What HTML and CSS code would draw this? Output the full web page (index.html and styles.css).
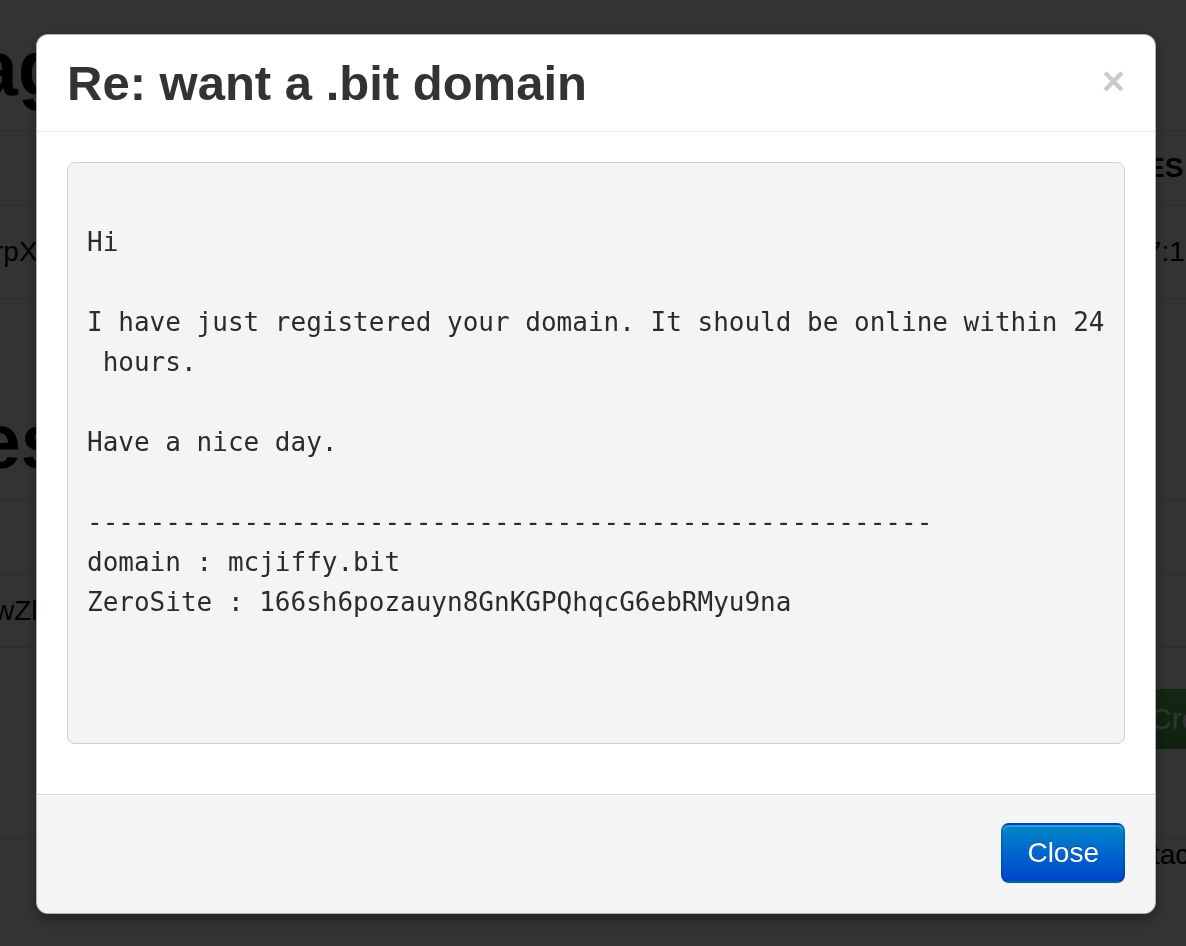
FILE: index.html
```html
<!DOCTYPE html>
<html>
<head>
<meta charset="utf-8">
<title>Re: want a .bit domain</title>
<link rel="stylesheet" href="styles.css">
</head>
<body>
<div class="page">
  <div class="row head1"><div class="l"><span class="h1 cut-a">ag</span></div><div></div><div class="r"></div></div>
  <div class="row th"><div class="l"></div><div></div><div class="r"><b class="cut-r">ES</b></div></div>
  <div class="row td"><div class="l"><span class="cut-p">rpX</span></div><div></div><div class="r"><span class="cut-r">7:1</span></div></div>
  <div class="row head2"><div class="l"><span class="h1 cut-e">es</span></div><div></div><div class="r"></div></div>
  <div class="row th"><div class="l"></div><div></div><div class="r"></div></div>
  <div class="row td2"><div class="l"><span class="cut-w">wZh</span></div><div></div><div class="r"></div></div>
  <div class="row actions"><div class="l"></div><div></div><div class="r"><span class="btn-success">Cre</span></div></div>
  <div class="row foot"><div class="l"></div><div></div><div class="r"><span class="cut-t">tac</span></div></div>
</div>

<div class="backdrop"></div>

<div class="modal">
  <div class="modal-header">
    <span class="close">&times;</span>
    <h3>Re: want a .bit domain</h3>
  </div>
  <div class="modal-body">
<pre class="message">

Hi

I have just registered your domain. It should be online within 24
 hours.

Have a nice day.

------------------------------------------------------
domain : mcjiffy.bit
ZeroSite : 166sh6pozauyn8GnKGPQhqcG6ebRMyu9na

</pre>
  </div>
  <div class="modal-footer">
    <span class="btn btn-primary">Close</span>
  </div>
</div>
</body>
</html>
```

FILE: styles.css
```css
html, body {
  margin: 0;
  padding: 0;
  background: #ffffff;
  overflow: hidden;
  height: 100%;
}
body {
  font-family: "Liberation Sans", Arial, Helvetica, sans-serif;
  color: #000;
  font-size: 28px;
}

/* background page */
.page {
  display: flex;
  flex-direction: column;
  width: 1186px;
}
.row {
  display: grid;
  grid-template-columns: 36px 1fr 36px;
  border-bottom: 1px solid #dddddd;
  box-sizing: content-box;
}
.row .l {
  overflow: hidden;
  white-space: nowrap;
  display: flex;
  align-items: center;
}
.row .r {
  overflow: visible;
  white-space: nowrap;
  display: flex;
  align-items: center;
}
.h1 {
  font-size: 77px;
  font-weight: bold;
  line-height: 80px;
}
.head1 { height: 130px; }
.head1 .l { align-items: flex-end; padding-bottom: 22px; }
.head2 { height: 200px; }
.head2 .l { align-items: flex-end; padding-bottom: 18px; }
.th { height: 74px; }
.td { height: 92px; }
.td2 { height: 72px; }
.actions { height: 190px; }
.actions .r { align-items: flex-start; padding-top: 41px; }
.foot { height: 104px; border-bottom: none; }
.foot .r { align-items: flex-start; }
.cut-a { margin-left: -25px; }
.cut-e { margin-left: -22px; }
.cut-p { margin-left: -6px; }
.cut-w { margin-left: -6px; }
.cut-r { margin-left: -4px; }
.cut-t { margin-left: 2px; line-height: 32px; }
.btn-success {
  display: inline-block;
  height: 60px;
  line-height: 60px;
  padding: 0 40px 0 20px;
  margin-left: -20px;
  background: linear-gradient(#62c462, #51a351);
  color: #fff;
  font-size: 30px;
}

.backdrop {
  position: fixed;
  inset: 0;
  background: rgba(0, 0, 0, 0.8);
}

/* modal */
.modal {
  position: fixed;
  top: 34px;
  left: 36px;
  width: 1120px;
  box-sizing: border-box;
  background: #fff;
  border: 1px solid rgba(0, 0, 0, 0.3);
  border-radius: 12px;
  box-shadow: 0 6px 14px rgba(0, 0, 0, 0.3);
  font-family: "Liberation Sans", Arial, Helvetica, sans-serif;
  color: #333;
}
.modal-header {
  padding: 18px 30px;
  border-bottom: 1px solid #eeeeee;
}
.modal-header h3 {
  margin: 0;
  font-size: 49px;
  line-height: 60px;
  font-weight: bold;
  color: #333;
}
.close {
  float: right;
  font-size: 40px;
  font-weight: bold;
  line-height: 40px;
  margin-top: 8px;
  color: #000;
  opacity: 0.2;
}
.modal-body {
  padding: 30px;
}
.message {
  margin: 0 0 20px;
  padding: 19px 19px 81px;
  background: #f4f4f4;
  border: 1px solid #cfcfcf;
  border-radius: 8px;
  font-family: "DejaVu Sans Mono", Menlo, monospace;
  font-size: 26px;
  line-height: 40px;
  color: #2b2b2b;
  white-space: pre;
  overflow: hidden;
}
.modal-footer {
  padding: 28px 30px 30px;
  background: #f5f5f5;
  border-top: 1px solid #dddddd;
  border-radius: 0 0 12px 12px;
  box-shadow: inset 0 1px 0 #fff;
  text-align: right;
}
.btn {
  display: inline-block;
  padding: 8px 24px;
  font-size: 28px;
  line-height: 40px;
  border-radius: 8px;
  border: 2px solid;
  vertical-align: top;
}
.btn-primary {
  color: #fff;
  text-shadow: 0 -1px 0 rgba(0, 0, 0, 0.25);
  background: linear-gradient(#0088cc, #0044cc);
  border-color: rgba(0, 0, 0, 0.1) rgba(0, 0, 0, 0.1) rgba(0, 0, 0, 0.25);
  box-shadow: inset 0 2px 0 rgba(255, 255, 255, 0.2), 0 1px 2px rgba(0, 0, 0, 0.05);
}
```
